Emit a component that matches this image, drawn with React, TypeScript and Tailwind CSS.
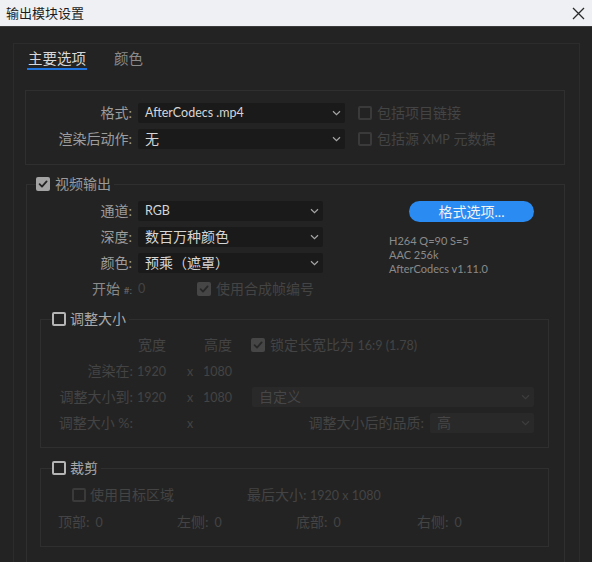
import React from "react";

const Chevron = ({ className }: { className?: string }) => (
  <svg width="9" height="6" viewBox="0 0 9 6" className={className}>
    <path d="M1 1.2 4.5 4.6 8 1.2" fill="none" stroke="currentColor" strokeWidth="1.2" />
  </svg>
);

const Check = () => (
  <svg width="10" height="10" viewBox="0 0 10 10">
    <path
      d="M1.6 5.2 4 7.6 8.6 2.4"
      fill="none"
      stroke="currentColor"
      strokeWidth="1.8"
      strokeLinecap="round"
      strokeLinejoin="round"
    />
  </svg>
);

function Box({ checked, disabled }: { checked?: boolean; disabled?: boolean }) {
  if (checked) {
    return (
      <span
        className={`flex h-[14px] w-[14px] shrink-0 items-center justify-center rounded-[2px] ${
          disabled ? "bg-[#464646] text-[#272727]" : "bg-[#a3a3a3] text-[#232323]"
        }`}
      >
        <Check />
      </span>
    );
  }
  return (
    <span
      className={`block h-[14px] w-[14px] shrink-0 rounded-[2px] border-2 ${
        disabled ? "border-[#3a3a3a]" : "border-[#b5b5b5]"
      }`}
    />
  );
}

function Select({
  value,
  w,
  disabled,
  latin,
}: {
  value: string;
  w: string;
  disabled?: boolean;
  latin?: boolean;
}) {
  return (
    <div
      className={`flex h-[20px] shrink-0 items-center justify-between rounded-[2px] pl-[7px] pr-[4px] ${w} ${
        disabled ? "bg-[#292929] text-[#464646]" : "bg-[#1a1a1a] text-[#d6d6d6]"
      }`}
    >
      <span className={latin ? "text-[12.5px]" : "text-[14px]"}>{value}</span>
      <Chevron className={disabled ? "text-[#3d3d3d]" : "text-[#a6a6a6]"} />
    </div>
  );
}

const L = ({ children }: { children: React.ReactNode }) => (
  <span className="text-[12.5px]">{children}</span>
);

export default function App() {
  return (
    <div className="flex h-[562px] w-[592px] flex-col overflow-hidden bg-[#232323] font-[Lato,'Noto_Sans_CJK_SC',sans-serif] text-[14px] leading-[16px]">
      {/* title bar */}
      <div className="flex h-[27px] shrink-0 items-center justify-between border-b border-[#3b3b3b] bg-[#eef0f3] pl-[6px] pr-[7px]">
        <span className="text-[13px] text-[#1c1c1c]">输出模块设置</span>
        <svg width="13" height="13" viewBox="0 0 13 13">
          <path d="M1 1 12 12M12 1 1 12" stroke="#2a2a2a" strokeWidth="1.3" />
        </svg>
      </div>

      <div className="flex flex-1 flex-col pl-[13px] pr-[12px] pt-[16px]">
        <div className="flex-1 border border-b-0 border-[#2c2c2c]">
          {/* tabs */}
          <div className="flex gap-[28px] pl-[14px] pt-[6px]">
            <div className="flex flex-col">
              <span className="text-[14.5px] leading-[18px] text-[#d8d8d8]">主要选项</span>
              <div className="-mx-[1px] h-[2px] bg-[#1f74e0]" />
            </div>
            <span className="text-[14.5px] leading-[18px] text-[#8a8a8a]">颜色</span>
          </div>

          {/* format box */}
          <div className="ml-[11px] mr-[14px] mt-[20px] flex flex-col gap-[6px] border border-[#2f2f2f] pb-[15px] pt-[12px]">
            <div className="flex h-[20px] items-center">
              <span className="w-[106px] shrink-0 text-right text-[#9d9d9d]">格式:</span>
              <div className="ml-[6px]">
                <Select value="AfterCodecs .mp4" w="w-[207px]" latin />
              </div>
              <span className="ml-[13px] flex">
                <Box disabled />
              </span>
              <span className="ml-[5px] text-[#444444]">包括项目链接</span>
            </div>
            <div className="flex h-[20px] items-center">
              <span className="w-[106px] shrink-0 text-right text-[#9d9d9d]">渲染后动作:</span>
              <div className="ml-[6px]">
                <Select value="无" w="w-[207px]" />
              </div>
              <span className="ml-[13px] flex">
                <Box disabled />
              </span>
              <span className="ml-[5px] text-[#444444]">
                包括源 <L>XMP</L> 元数据
              </span>
            </div>
          </div>

          {/* video output */}
          <fieldset className="ml-[12px] mr-[14px] mt-[11px] border border-[#2f2f2f]">
            <legend className="ml-[9px] pr-[3px]">
              <span className="flex items-center">
                <Box checked />
                <span className="ml-[5px] text-[#9a9a9a]">视频输出</span>
              </span>
            </legend>

            <div className="pb-[24px] pt-[9px]">
              <div className="flex">
                <div className="flex flex-col gap-[6px]">
                  <div className="flex h-[20px] items-center">
                    <span className="w-[105px] shrink-0 text-right text-[#9d9d9d]">通道:</span>
                    <div className="ml-[6px]">
                      <Select value="RGB" w="w-[185px]" latin />
                    </div>
                  </div>
                  <div className="flex h-[20px] items-center">
                    <span className="w-[105px] shrink-0 text-right text-[#9d9d9d]">深度:</span>
                    <div className="ml-[6px]">
                      <Select value="数百万种颜色" w="w-[185px]" />
                    </div>
                  </div>
                  <div className="flex h-[20px] items-center">
                    <span className="w-[105px] shrink-0 text-right text-[#9d9d9d]">颜色:</span>
                    <div className="ml-[6px]">
                      <Select value="预乘（遮罩）" w="w-[185px]" />
                    </div>
                  </div>
                  <div className="mt-[1px] flex h-[18px] items-center">
                    <span className="w-[105px] shrink-0 text-right text-[#8a8a8a]">
                      开始 <span className="text-[10px] text-[#6a6a6a]">#:</span>
                    </span>
                    <span className="ml-[6px] w-[59px] text-[12.5px] text-[#444444]">0</span>
                    <Box checked disabled />
                    <span className="ml-[5px] text-[#444444]">使用合成帧编号</span>
                  </div>
                </div>

                <div className="ml-[66px] flex flex-col">
                  <div className="ml-[20px] flex h-[21px] w-[125px] items-center justify-center rounded-full bg-[#2a8bf2] text-[14px] text-[#f2f2f2]">
                    格式选项...
                  </div>
                  <div className="mt-[12px] text-[11px] leading-[14px] text-[#8a8a8a]">
                    <div>H264 Q=90 S=5</div>
                    <div>AAC 256k</div>
                    <div>AfterCodecs v1.11.0</div>
                  </div>
                </div>
              </div>

              {/* resize */}
              <fieldset className="ml-[13px] mr-[15px] mt-[13px] border border-[#2f2f2f]">
                <legend className="ml-[11px] pr-[3px]">
                  <span className="flex items-center">
                    <Box />
                    <span className="ml-[4px] text-[#a9a9a9]">调整大小</span>
                  </span>
                </legend>
                <div className="flex flex-col gap-[6px] pb-[14px] pr-[14px] pt-[8px] text-[#444444]">
                  <div className="flex h-[20px] items-center">
                    <span className="w-[97px] shrink-0" />
                    <span className="w-[66px] shrink-0">宽度</span>
                    <span className="w-[47px] shrink-0">高度</span>
                    <Box checked disabled />
                    <span className="ml-[5px]">
                      锁定长宽比为 <L>16:9 (1.78)</L>
                    </span>
                  </div>
                  <div className="flex h-[20px] items-center">
                    <span className="w-[92px] shrink-0 text-right">渲染在:</span>
                    <span className="ml-[4px] w-[40px] shrink-0">
                      <L>1920</L>
                    </span>
                    <span className="w-[26px] shrink-0 text-center">
                      <L>x</L>
                    </span>
                    <span className="w-[48px] shrink-0">
                      <L>1080</L>
                    </span>
                  </div>
                  <div className="flex h-[20px] items-center">
                    <span className="w-[92px] shrink-0 text-right">调整大小到:</span>
                    <span className="ml-[4px] w-[40px] shrink-0">
                      <L>1920</L>
                    </span>
                    <span className="w-[26px] shrink-0 text-center">
                      <L>x</L>
                    </span>
                    <span className="w-[48px] shrink-0">
                      <L>1080</L>
                    </span>
                    <div className="ml-[1px] flex-1">
                      <Select value="自定义" w="w-full" disabled />
                    </div>
                  </div>
                  <div className="flex h-[20px] items-center">
                    <span className="w-[92px] shrink-0 text-right">调整大小 %:</span>
                    <span className="ml-[44px] w-[26px] shrink-0 text-center">
                      <L>x</L>
                    </span>
                    <div className="flex flex-1 items-center justify-end">
                      <span>调整大小后的品质:</span>
                      <div className="ml-[6px]">
                        <Select value="高" w="w-[104px]" disabled />
                      </div>
                    </div>
                  </div>
                </div>
              </fieldset>

              {/* crop */}
              <fieldset className="ml-[13px] mr-[15px] mt-[12px] border border-[#2f2f2f]">
                <legend className="ml-[11px] pr-[3px]">
                  <span className="flex items-center">
                    <Box />
                    <span className="ml-[4px] text-[#a9a9a9]">裁剪</span>
                  </span>
                </legend>
                <div className="flex flex-col gap-[11px] pb-[16px] pt-[11px] text-[#444444]">
                  <div className="flex h-[16px] items-center pl-[31px]">
                    <span className="flex w-[175px] shrink-0 items-center">
                      <Box disabled />
                      <span className="ml-[4px]">使用目标区域</span>
                    </span>
                    <span>
                      最后大小: <L>1920 x 1080</L>
                    </span>
                  </div>
                  <div className="flex h-[16px] items-center pl-[17px]">
                    <span className="w-[119px] shrink-0">
                      顶部:<span className="ml-[6px] text-[12.5px]">0</span>
                    </span>
                    <span className="w-[119px] shrink-0">
                      左侧:<span className="ml-[6px] text-[12.5px]">0</span>
                    </span>
                    <span className="w-[121px] shrink-0">
                      底部:<span className="ml-[6px] text-[12.5px]">0</span>
                    </span>
                    <span>
                      右侧:<span className="ml-[6px] text-[12.5px]">0</span>
                    </span>
                  </div>
                </div>
              </fieldset>
            </div>
          </fieldset>
        </div>
      </div>
    </div>
  );
}
